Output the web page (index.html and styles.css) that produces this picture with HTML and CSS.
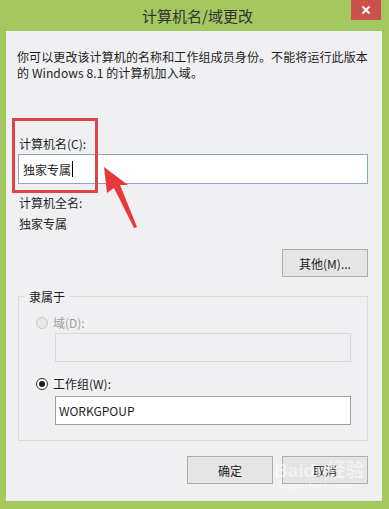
FILE: index.html
```html
<!DOCTYPE html>
<html>
<head>
<meta charset="utf-8">
<link rel="stylesheet" href="styles.css">
</head>
<body>
<div class="win">
  <div class="titlebar">
    <div class="title">计算机名/域更改</div>
    <div class="close">
      <svg width="10" height="10" viewBox="0 0 10 10"><path d="M1.5 1.5L8.5 8.5M8.5 1.5L1.5 8.5" stroke="#fff" stroke-width="2"/></svg>
    </div>
  </div>
  <div class="content">
    <p class="desc">你可以更改该计算机的名称和工作组成员身份。不能将运行此版本<br>的 Windows 8.1 的计算机加入域。</p>
    <div class="label first">计算机名(C):</div>
    <div class="input name"><span>独家专属</span><span class="caret"></span></div>
    <div class="label full">计算机全名:</div>
    <div class="label value">独家专属</div>
    <div class="row more-row"><div class="btn">其他(M)...</div></div>
    <div class="group">
      <div class="legend">隶属于</div>
      <div class="radio-row disabled"><span class="radio"></span><span>域(D):</span></div>
      <div class="input sub disabled-input"></div>
      <div class="radio-row wg"><span class="radio checked"></span><span>工作组(W):</span></div>
      <div class="input sub wg-input">WORKGPOUP</div>
    </div>
    <div class="row actions">
      <div class="btn">确定</div>
      <div class="btn">取消</div>
    </div>
    <div class="redbox"></div>
    <svg class="arrow" width="60" height="70" viewBox="0 0 60 70">
      <polygon points="3,2 27,20 19,20 36,62 33,63 13,23 6,28" fill="#e8393a"/>
    </svg>
    <div class="watermark">Baidu经验<div class="wm-sub">jingyan.baidu.com</div></div>
  </div>
</div>
</body>
</html>
```
FILE: styles.css
```css
html, body {
  margin: 0;
  padding: 0;
  background: #a3c85f;
}
body {
  width: 389px;
  height: 509px;
  overflow: hidden;
  font-family: "Noto Sans CJK SC", "Liberation Sans", sans-serif;
  font-size: 12px;
  color: #1e1e1e;
}
.win {
  width: 389px;
  height: 509px;
  background: #a3c85f;
  display: flex;
  flex-direction: column;
  box-sizing: border-box;
  padding: 0 7px 0 6px;
}
.titlebar {
  height: 31px;
  position: relative;
  display: flex;
  justify-content: center;
  align-items: center;
}
.title {
  font-size: 15px;
  color: #333;
  margin-left: 7px;
}
.close {
  position: absolute;
  right: 1px;
  top: 0;
  width: 30px;
  height: 20px;
  background: #c9504b;
  display: flex;
  align-items: center;
  justify-content: center;
}
.content {
  position: relative;
  height: 470px;
  background: #f0f0f2;
  box-sizing: border-box;
  padding: 18px 14px 0 12px;
  border-bottom: 1px solid #e4efd0;
}
.desc {
  margin: 0 -8px 0 -1px;
  line-height: 16px;
  white-space: nowrap;
  letter-spacing: 0.1px;
}
.label {
  line-height: 15px;
  padding-left: 1px;
}
.label.first { margin-top: 55px; }
.label.full { margin-top: 11px; }
.label.value { margin-top: 6px; }
.input {
  height: 30px;
  box-sizing: border-box;
  border: 1px solid #8aa6c1;
  background: #fff;
  display: flex;
  align-items: center;
  padding-left: 4px;
}
.input.name {
  margin-top: 3px;
  width: 350px;
}
.caret {
  display: inline-block;
  width: 1px;
  height: 16px;
  background: #000;
  margin-left: 1px;
}
.row {
  display: flex;
  justify-content: flex-end;
  gap: 9px;
}
.btn {
  width: 86px;
  height: 28px;
  box-sizing: border-box;
  border: 1px solid #adadad;
  background: #e5e5e5;
  display: flex;
  align-items: center;
  justify-content: center;
}
.more-row { margin-top: 18px; }
.group {
  margin-top: 19px;
  width: 350px;
  box-sizing: border-box;
  border: 1px solid #dcdcdc;
  padding: 0 16px 15px 17px;
  position: relative;
}
.legend {
  line-height: 15px;
  margin-top: -8px;
  margin-left: -11px;
  padding: 0 4px;
  background: #f0f0f2;
  width: max-content;
}
.radio-row {
  display: flex;
  align-items: center;
  line-height: 15px;
  gap: 5px;
  margin-top: 11px;
}
.radio-row.wg { margin-top: 14px; }
.radio-row.disabled { color: #a0a0a0; }
.radio {
  width: 12px;
  height: 12px;
  box-sizing: border-box;
  border-radius: 50%;
  border: 1px solid #c8c8c8;
  background: #e8e8e8;
  display: inline-flex;
  align-items: center;
  justify-content: center;
}
.radio.checked {
  border-color: #333;
  background: #fff;
}
.radio.checked::after {
  content: "";
  width: 6px;
  height: 6px;
  border-radius: 50%;
  background: #1a1a1a;
}
.input.sub {
  margin-left: 19px;
  width: 296px;
  height: 29px;
}
.disabled-input {
  margin-top: 3px;
  border-color: #d9d9d9;
  background: #f0f0f2;
}
.wg-input {
  margin-top: 5px;
  border-color: #a0a0a0;
  padding-left: 3px;
}
.actions { margin-top: 15px; }
.redbox {
  position: absolute;
  left: 6px;
  top: 87px;
  width: 86px;
  height: 75px;
  box-sizing: border-box;
  border: 3px solid #d9464a;
}
.arrow {
  position: absolute;
  left: 95px;
  top: 134px;
}
.watermark {
  position: absolute;
  left: 268px;
  top: 430px;
  font-family: "Liberation Sans", "Noto Sans CJK SC", sans-serif;
  font-size: 19px;
  font-weight: bold;
  color: rgba(255, 255, 255, 0.5);
  line-height: 20px;
  pointer-events: none;
}
.wm-sub {
  font-size: 9px;
  font-weight: normal;
  line-height: 10px;
  padding-left: 4px;
}
```
